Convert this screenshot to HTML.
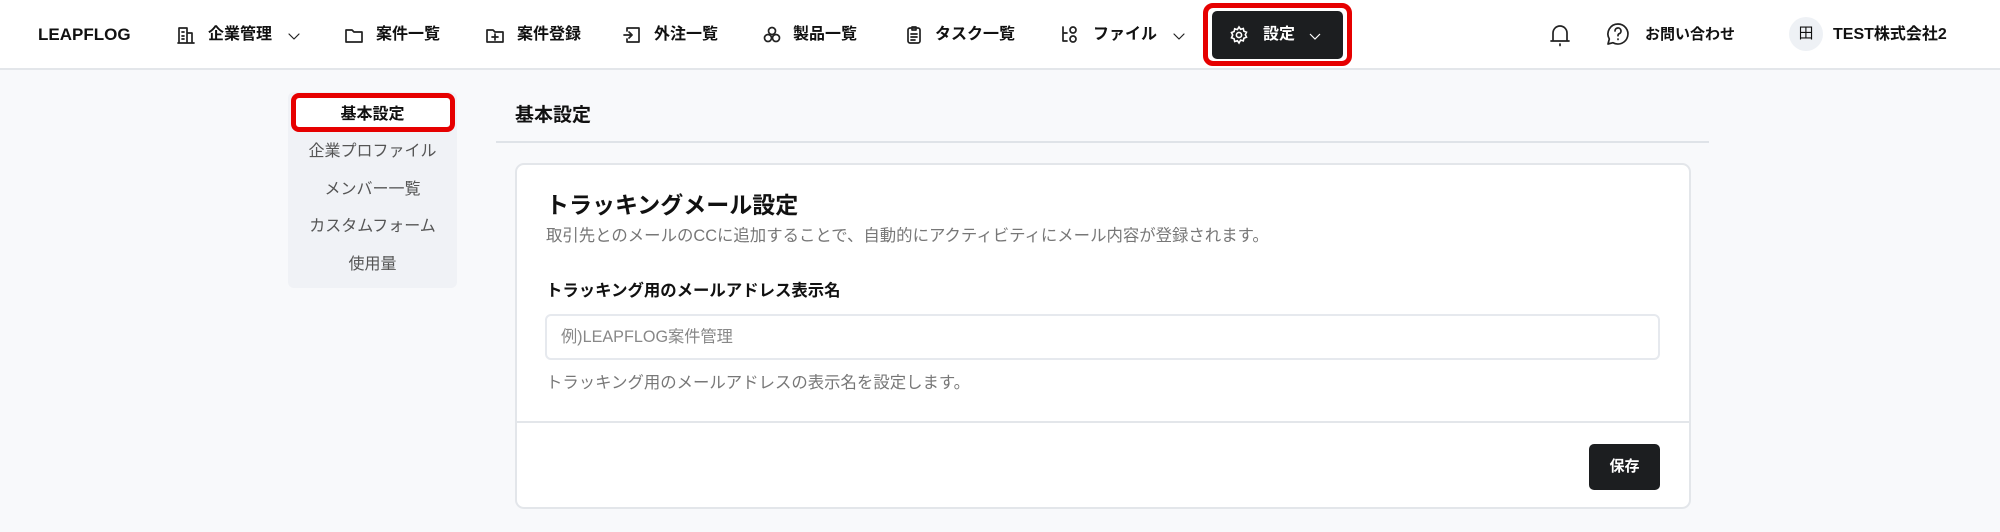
<!DOCTYPE html>
<html><head><meta charset="utf-8"><style>
*{box-sizing:border-box;margin:0;padding:0}
body{width:2000px;height:532px;background:#f8f9fb;font-family:"Liberation Sans","Noto Sans CJK JP",sans-serif;color:#111;position:relative;overflow:hidden}
.a{position:absolute;white-space:nowrap}
.hdr{position:absolute;left:0;top:0;width:2000px;height:70px;background:#fff;border-bottom:2px solid #e3e6ea}
.nav{font-size:16px;font-weight:600;top:24px;line-height:22px}
svg{position:absolute}
.ic{fill:none;stroke:#222;stroke-width:1.7;stroke-linecap:round;stroke-linejoin:round}
.ch{stroke-width:1.2}
.side{font-size:16px;color:#555;left:288px;width:169px;text-align:center;line-height:22px}
</style></head><body>
<div class="hdr"></div>
<div class="a" style="left:38px;top:24px;font-size:17px;font-weight:700;line-height:22px">LEAPFLOG</div>

<svg class="ic" style="left:176px;top:25px" width="20" height="20" viewBox="0 0 20 20"><path d="M3 18V3h8v15M11 8h5v10M2 18h16M6 7h2M6 11h2M6 14h2"/></svg>
<div class="a nav" style="left:208px">企業管理</div>
<svg class="ic ch" style="left:287px;top:29px" width="14" height="14" viewBox="0 0 14 14"><path d="M2 5l5 5 5-5"/></svg>

<svg class="ic" style="left:344px;top:25px" width="20" height="20" viewBox="0 0 20 20"><path d="M2 5h6l2 2h8v10H2z"/></svg>
<div class="a nav" style="left:376px">案件一覧</div>

<svg class="ic" style="left:485px;top:25px" width="20" height="20" viewBox="0 0 20 20"><path d="M2 5h6l2 2h8v10H2zM10 9v6M7 12h6"/></svg>
<div class="a nav" style="left:517px">案件登録</div>

<svg class="ic" style="left:622px;top:25px" width="20" height="20" viewBox="0 0 20 20"><path d="M5 3h12v14H5v-3M5 3v3M2 10h8M7 7l3 3-3 3"/></svg>
<div class="a nav" style="left:654px">外注一覧</div>

<svg class="ic" style="left:762px;top:25px" width="20" height="20" viewBox="0 0 20 20"><circle cx="10" cy="6" r="3.5"/><circle cx="6" cy="13" r="3.5"/><circle cx="14" cy="13" r="3.5"/></svg>
<div class="a nav" style="left:793px">製品一覧</div>

<svg class="ic" style="left:904px;top:25px" width="20" height="20" viewBox="0 0 20 20"><rect x="4" y="3" width="12" height="15" rx="2"/><path d="M8 2h4v3H8zM7 9h6M7 12h6M7 15h4"/></svg>
<div class="a nav" style="left:935px">タスク一覧</div>

<svg class="ic" style="left:1060px;top:25px" width="22" height="20" viewBox="0 0 22 20"><path d="M3 2v14h4M3 8h4"/><circle cx="13" cy="5" r="3"/><circle cx="13" cy="14" r="3"/></svg>
<div class="a nav" style="left:1093px">ファイル</div>
<svg class="ic ch" style="left:1172px;top:29px" width="14" height="14" viewBox="0 0 14 14"><path d="M2 5l5 5 5-5"/></svg>

<div class="a" style="left:1203px;top:3px;width:149px;height:63px;border:5px solid #e60000;border-radius:10px"></div>
<div class="a" style="left:1212px;top:11px;width:131px;height:48px;background:#1c1e20;border-radius:5px"></div>
<svg style="left:1229px;top:25px;fill:none;stroke:#fff;stroke-width:1.6" width="20" height="20" viewBox="0 0 20 20"><circle cx="10" cy="10" r="2.6"/><path d="M10 2l1.6 2.3 2.7-.8.6 2.7 2.6 1-1.2 2.5 1.2 2.5-2.6 1-.6 2.7-2.7-.8L10 18l-1.6-2.3-2.7.8-.6-2.7-2.6-1L3.7 10 2.5 7.5l2.6-1 .6-2.7 2.7.8z"/></svg>
<div class="a nav" style="left:1263px;color:#fff">設定</div>
<svg style="left:1308px;top:29px;fill:none;stroke:#fff;stroke-width:1.2" width="14" height="14" viewBox="0 0 14 14"><path d="M2 5l5 5 5-5"/></svg>

<svg class="ic" style="left:1548px;top:22px" width="24" height="26" viewBox="0 0 24 26"><path d="M5 19V11a7 7 0 0 1 14 0v8zM3 19h18M12 22v1.5"/></svg>
<svg class="ic" style="left:1605px;top:21px" width="26" height="26" viewBox="0 0 26 26"><path d="M13 3a10 10 0 1 1-5 18.7L3 23l1.3-5A10 10 0 0 1 13 3z"/><path d="M10 10a3 3 0 1 1 4 2.8c-1 .4-1 1-1 2M13 18v.5"/></svg>
<div class="a nav" style="left:1645px;font-size:15px">お問い合わせ</div>
<div class="a" style="left:1789px;top:17px;width:34px;height:34px;border-radius:50%;background:#eef1f5;font-size:15px;text-align:center;line-height:34px">田</div>
<div class="a nav" style="left:1833px">TEST株式会社2</div>

<div class="a" style="left:288px;top:92px;width:169px;height:196px;background:#f0f2f6;border-radius:6px"></div>
<div class="a" style="left:291px;top:93px;width:164px;height:39px;background:#fff;border:5px solid #e60000;border-radius:8px"></div>
<div class="a side" style="top:104px;color:#111;font-weight:600">基本設定</div>
<div class="a side" style="top:141px">企業プロファイル</div>
<div class="a side" style="top:179px">メンバー一覧</div>
<div class="a side" style="top:216px">カスタムフォーム</div>
<div class="a side" style="top:254px">使用量</div>

<div class="a" style="left:515px;top:103px;font-size:19px;font-weight:700;line-height:26px">基本設定</div>
<div class="a" style="left:496px;top:141px;width:1213px;height:2px;background:#dfe3e8"></div>

<div class="a" style="left:515px;top:163px;width:1176px;height:346px;background:#fff;border:2px solid #e3e6ea;border-radius:9px"></div>
<div class="a" style="left:546px;top:190px;font-size:23px;font-weight:700;line-height:30px">トラッキングメール設定</div>
<div class="a" style="left:546px;top:226px;font-size:16.4px;color:#777;line-height:20px">取引先とのメールのCCに追加することで、自動的にアクティビティにメール内容が登録されます。</div>
<div class="a" style="left:546px;top:280px;font-size:16.4px;font-weight:700;line-height:22px">トラッキング用のメールアドレス表示名</div>
<div class="a" style="left:545px;top:314px;width:1115px;height:46px;border:2px solid #e6e9ee;border-radius:6px"></div>
<div class="a" style="left:561px;top:327px;font-size:16.2px;color:#888;line-height:20px">例)LEAPFLOG案件管理</div>
<div class="a" style="left:546px;top:373px;font-size:16.4px;color:#777;line-height:20px">トラッキング用のメールアドレスの表示名を設定します。</div>
<div class="a" style="left:516px;top:421px;width:1174px;height:2px;background:#e3e6ea"></div>
<div class="a" style="left:1589px;top:444px;width:71px;height:46px;background:#1c1e20;border-radius:5px;color:#fff;font-size:15px;font-weight:700;text-align:center;line-height:46px">保存</div>
</body></html>
